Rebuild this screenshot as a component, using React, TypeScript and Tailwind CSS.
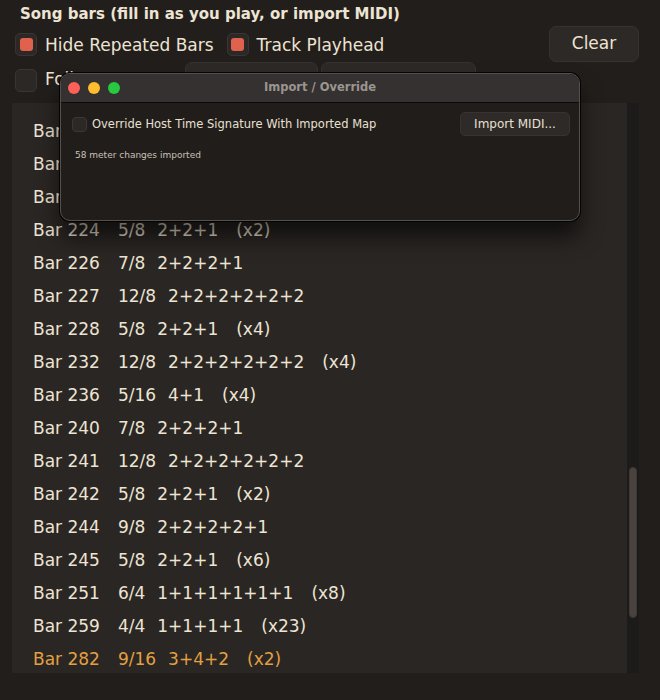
import React from "react";

type Row = { bar: string; sig: string; pattern: string; count?: string; current?: boolean };

const rows: Row[] = [
  { bar: "Bar 216", sig: "7/8", pattern: "2+2+2+1" },
  { bar: "Bar 217", sig: "12/8", pattern: "2+2+2+2+2+2" },
  { bar: "Bar 218", sig: "5/8", pattern: "2+2+1", count: "(x6)" },
  { bar: "Bar 224", sig: "5/8", pattern: "2+2+1", count: "(x2)" },
  { bar: "Bar 226", sig: "7/8", pattern: "2+2+2+1" },
  { bar: "Bar 227", sig: "12/8", pattern: "2+2+2+2+2+2" },
  { bar: "Bar 228", sig: "5/8", pattern: "2+2+1", count: "(x4)" },
  { bar: "Bar 232", sig: "12/8", pattern: "2+2+2+2+2+2", count: "(x4)" },
  { bar: "Bar 236", sig: "5/16", pattern: "4+1", count: "(x4)" },
  { bar: "Bar 240", sig: "7/8", pattern: "2+2+2+1" },
  { bar: "Bar 241", sig: "12/8", pattern: "2+2+2+2+2+2" },
  { bar: "Bar 242", sig: "5/8", pattern: "2+2+1", count: "(x2)" },
  { bar: "Bar 244", sig: "9/8", pattern: "2+2+2+2+1" },
  { bar: "Bar 245", sig: "5/8", pattern: "2+2+1", count: "(x6)" },
  { bar: "Bar 251", sig: "6/4", pattern: "1+1+1+1+1+1", count: "(x8)" },
  { bar: "Bar 259", sig: "4/4", pattern: "1+1+1+1", count: "(x23)" },
  { bar: "Bar 282", sig: "9/16", pattern: "3+4+2", count: "(x2)", current: true },
];

function Check({ on }: { on?: boolean }) {
  return (
    <span className="w-[22px] h-[23px] rounded-[5px] bg-[#2c2826] border border-[#3a3532] flex items-center justify-center flex-shrink-0">
      {on && <span className="w-[13px] h-[13px] rounded-[3px] bg-[#e0614e]" />}
    </span>
  );
}

export default function App() {
  return (
    <div
      className="relative w-[660px] h-[700px] overflow-hidden bg-[#221e1c] text-[#ede4d3]"
      style={{ fontFamily: '"DejaVu Sans", "Liberation Sans", sans-serif' }}
    >
      {/* header */}
      <div className="h-[26px] pl-[20px] pt-[5px] text-[15px] font-bold leading-[18px]">
        Song bars (fill in as you play, or import MIDI)
      </div>

      <div className="h-[36px] flex items-center pl-[15px] pr-[21px]">
        <Check on />
        <span className="ml-[8px] text-[17px] leading-[20px] pt-[2px]">Hide Repeated Bars</span>
        <span className="ml-[13px]">
          <Check on />
        </span>
        <span className="ml-[8px] text-[17px] leading-[20px] pt-[2px]">Track Playhead</span>
        <button className="ml-auto w-[90px] h-[36px] rounded-[7px] bg-[#2d2926] border border-[#363230] text-[17px]">
          Clear
        </button>
      </div>

      <div className="h-[36px] flex items-center pl-[15px]">
        <Check />
        <span className="ml-[8px] text-[17px] w-[140px]">Follow</span>
        <button className="w-[133px] h-[36px] rounded-[7px] bg-[#2d2926] border border-[#363230] text-[14px]">
          Export
        </button>
        <button className="ml-[3px] w-[155px] h-[36px] rounded-[7px] bg-[#2d2926] border border-[#363230] text-[15px] pt-[4px]">
          Import / Override
        </button>
      </div>

      {/* bar list */}
      <div className="mt-[5px] ml-[12px] w-[627px] h-[570px] flex">
        <div className="flex-1 bg-[#2a2624] overflow-hidden pt-[12px] pl-[21px]">
          {rows.map((r) => (
            <div
              key={r.bar}
              className={`h-[33px] flex items-center whitespace-nowrap text-[17px] ${
                r.current ? "text-[#e2a043]" : "text-[#ede4d3]"
              }`}
            >
              <span>{r.bar}</span>
              <span className="ml-[18px]">{r.sig}</span>
              <span className="ml-[12px]">{r.pattern}</span>
              {r.count && <span className="ml-[18px]">{r.count}</span>}
            </div>
          ))}
        </div>
        <div className="w-[12px] bg-[#1d1b1a] pt-[364px] pl-[2px]">
          <div className="w-[8px] h-[151px] rounded-full bg-[#4a423e] border border-[#3f3835]" />
        </div>
      </div>

      {/* Import / Override window */}
      <div className="absolute left-[60px] top-[73px] w-[520px] h-[148px] rounded-[10px] border border-[#54504d] bg-[#211d1b] overflow-hidden shadow-[0_0_0_1px_rgba(0,0,0,0.85),0_16px_22px_rgba(0,0,0,0.6)]">
        <div className="relative h-[29px] bg-[#343130] border-b border-[#0b0a0a] flex items-center">
          <div className="flex items-center gap-[8px] pl-[7px]">
            <span className="w-[12px] h-[12px] rounded-full bg-[#fe5f57]" />
            <span className="w-[12px] h-[12px] rounded-full bg-[#febc2e]" />
            <span className="w-[12px] h-[12px] rounded-full bg-[#28c840]" />
          </div>
          <span className="absolute left-0 right-0 text-center text-[11.5px] font-bold text-[#9b9590]">
            Import / Override
          </span>
        </div>
        <div className="flex items-center pl-[11px] pr-[9px] pt-[9px]">
          <span className="w-[15px] h-[15px] rounded-[4px] bg-[#2c2826] border border-[#3c3734]" />
          <span className="ml-[5px] text-[11.5px] text-[#e8e0d2] pt-[1px]">
            Override Host Time Signature With Imported Map
          </span>
          <button className="ml-auto w-[110px] h-[24px] rounded-[5px] bg-[#2e2a28] border border-[#383331] text-[12px] text-[#e8e0d2]">
            Import MIDI...
          </button>
        </div>
        <div className="pl-[14px] pt-[13px] text-[9px] text-[#c9c1b6]">58 meter changes imported</div>
      </div>
    </div>
  );
}
